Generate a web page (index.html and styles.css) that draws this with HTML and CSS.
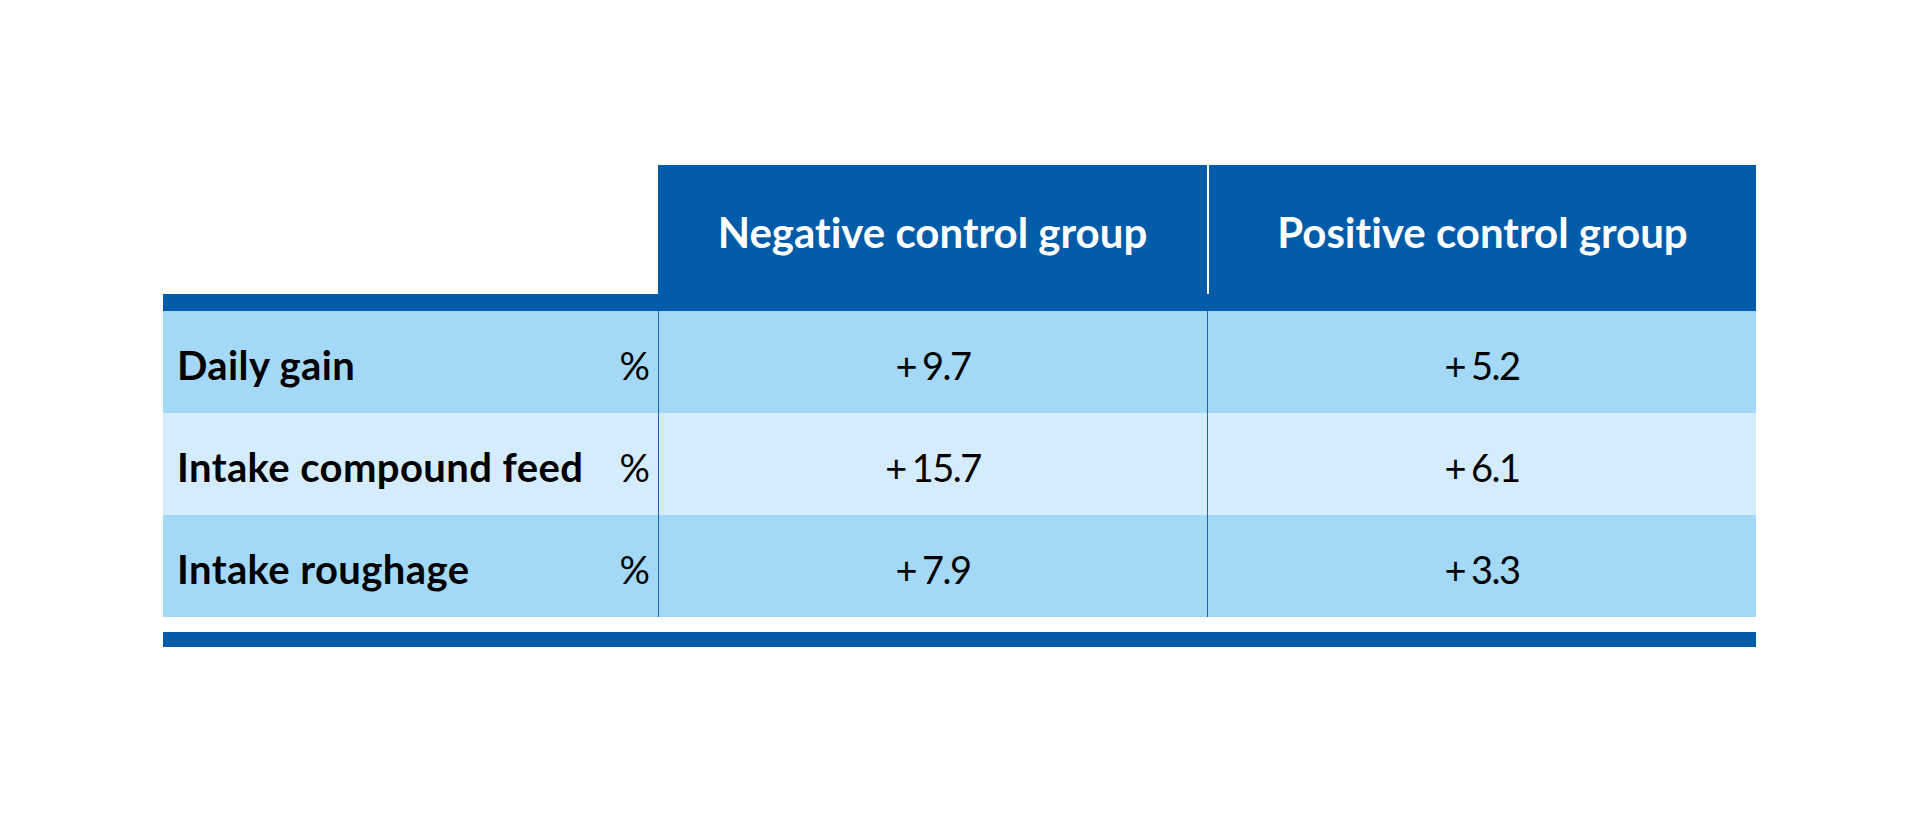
FILE: index.html
```html
<!DOCTYPE html>
<html lang="en">
<head>
<meta charset="utf-8">
<title>Control group results</title>
<link rel="stylesheet" href="styles.css">
</head>
<body>
<div class="page">
  <div class="table">
    <div class="head">
      <div class="head-empty"></div>
      <div class="head-cell">Negative control group</div>
      <div class="head-cell head-cell--last">Positive control group</div>
    </div>
    <div class="bar bar--top"></div>
    <div class="row row--dark">
      <div class="label"><span class="label-name">Daily gain</span><span class="unit">%</span></div>
      <div class="value"><span class="sign">+</span>9.7</div>
      <div class="value"><span class="sign">+</span>5.2</div>
    </div>
    <div class="row row--light">
      <div class="label"><span class="label-name">Intake compound feed</span><span class="unit">%</span></div>
      <div class="value"><span class="sign">+</span>15.7</div>
      <div class="value"><span class="sign">+</span>6.1</div>
    </div>
    <div class="row row--dark">
      <div class="label"><span class="label-name">Intake roughage</span><span class="unit">%</span></div>
      <div class="value"><span class="sign">+</span>7.9</div>
      <div class="value"><span class="sign">+</span>3.3</div>
    </div>
    <div class="bar bar--bottom"></div>
  </div>
</div>
</body>
</html>
```

FILE: styles.css
```css
html, body {
  margin: 0;
  padding: 0;
  background: #ffffff;
}

.page {
  padding: 165px 0 0 163px;
  font-family: Lato, "Open Sans", "Liberation Sans", sans-serif;
  font-variant-ligatures: none;
  color: #000;
}

.table {
  width: 1593px;
  display: flex;
  flex-direction: column;
}

.head,
.row {
  display: grid;
  grid-template-columns: 495px 549px 549px;
}

.head {
  height: 129px;
}

.head-cell {
  background: #005ba9;
  color: #fff;
  font-weight: 700;
  font-size: 42px;
  display: flex;
  align-items: center;
  justify-content: center;
  padding-top: 4px;
  box-sizing: border-box;
}

.head-cell--last {
  border-left: 2px solid #ffffff;
}

.bar {
  background: #005ba9;
}

.bar--top {
  height: 17px;
}

.bar--bottom {
  height: 15px;
  margin-top: 15px;
}

.row {
  height: 102px;
}

.row--dark {
  background: #a3d9f7;
}

.row--light {
  background: #d4ecfb;
}

.label {
  display: flex;
  align-items: center;
  justify-content: space-between;
  padding: 6px 8px 0 14px;
  box-sizing: border-box;
}

.label-name {
  font-weight: 700;
  font-size: 40px;
  letter-spacing: 0.4px;
}

.unit {
  font-size: 38px;
  font-weight: 400;
}

.value {
  display: flex;
  align-items: center;
  justify-content: center;
  font-size: 38px;
  font-weight: 400;
  letter-spacing: -1.5px;
  padding-top: 6px;
  box-sizing: border-box;
  border-left: 1px solid #1d62ae;
}

.sign {
  margin-right: 6px;
}
```
